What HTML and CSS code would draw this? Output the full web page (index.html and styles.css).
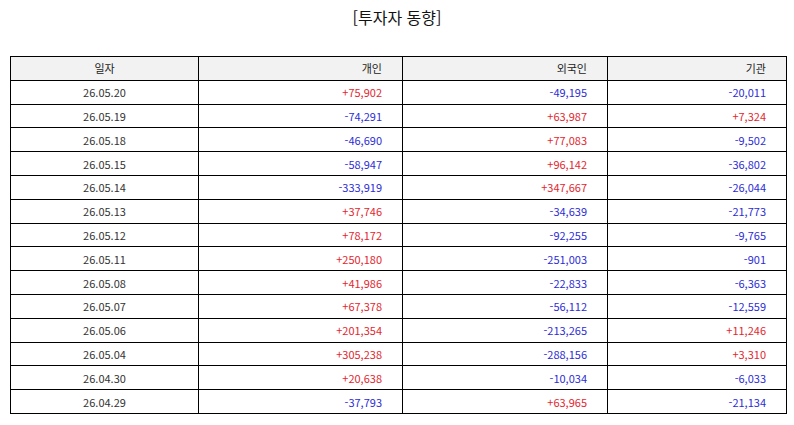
FILE: index.html
```html
<!DOCTYPE html>
<html lang="ko">
<head>
<meta charset="utf-8">
<link rel="stylesheet" href="styles.css">
</head>
<body>
<h1 class="title">[투자자 동향]</h1>
<table class="grid">
  <colgroup>
    <col class="c-date"><col class="c-ind"><col class="c-for"><col class="c-inst">
  </colgroup>
  <thead>
    <tr><th class="center">일자</th><th>개인</th><th>외국인</th><th>기관</th></tr>
  </thead>
  <tbody>
    <tr><td class="center">26.05.20</td><td class="up">+75,902</td><td class="down">-49,195</td><td class="down">-20,011</td></tr>
    <tr><td class="center">26.05.19</td><td class="down">-74,291</td><td class="up">+63,987</td><td class="up">+7,324</td></tr>
    <tr><td class="center">26.05.18</td><td class="down">-46,690</td><td class="up">+77,083</td><td class="down">-9,502</td></tr>
    <tr><td class="center">26.05.15</td><td class="down">-58,947</td><td class="up">+96,142</td><td class="down">-36,802</td></tr>
    <tr><td class="center">26.05.14</td><td class="down">-333,919</td><td class="up">+347,667</td><td class="down">-26,044</td></tr>
    <tr><td class="center">26.05.13</td><td class="up">+37,746</td><td class="down">-34,639</td><td class="down">-21,773</td></tr>
    <tr><td class="center">26.05.12</td><td class="up">+78,172</td><td class="down">-92,255</td><td class="down">-9,765</td></tr>
    <tr><td class="center">26.05.11</td><td class="up">+250,180</td><td class="down">-251,003</td><td class="down">-901</td></tr>
    <tr><td class="center">26.05.08</td><td class="up">+41,986</td><td class="down">-22,833</td><td class="down">-6,363</td></tr>
    <tr><td class="center">26.05.07</td><td class="up">+67,378</td><td class="down">-56,112</td><td class="down">-12,559</td></tr>
    <tr><td class="center">26.05.06</td><td class="up">+201,354</td><td class="down">-213,265</td><td class="up">+11,246</td></tr>
    <tr><td class="center">26.05.04</td><td class="up">+305,238</td><td class="down">-288,156</td><td class="up">+3,310</td></tr>
    <tr><td class="center">26.04.30</td><td class="up">+20,638</td><td class="down">-10,034</td><td class="down">-6,033</td></tr>
    <tr><td class="center">26.04.29</td><td class="down">-37,793</td><td class="up">+63,965</td><td class="down">-21,134</td></tr>
  </tbody>
</table>
</body>
</html>
```
FILE: styles.css
```css
html, body {
  margin: 0;
  padding: 0;
  background: #ffffff;
}
body {
  font-family: "Noto Sans CJK KR", "Noto Sans", sans-serif;
  color: #333333;
}
.title {
  margin: 6px 0 0 0;
  height: 50px;
  font-size: 16px;
  line-height: 22px;
  font-weight: normal;
  text-align: center;
  color: #111111;
}
.grid {
  margin-left: 10px;
  width: 776px;
  border-collapse: collapse;
  table-layout: fixed;
  border: 1px solid #000000;
  font-size: 11px;
}
.c-date { width: 188px; }
.c-ind { width: 204px; }
.c-for { width: 205px; }
.c-inst { width: 179px; }
.grid th, .grid td {
  border: 1px solid #000000;
  height: 22.8px;
  padding: 0 20px 0 0;
  text-align: right;
  line-height: 14px;
  white-space: nowrap;
}
.grid th {
  background: #f2f2f2;
  font-weight: normal;
  color: #222222;
}
.grid .center {
  text-align: center;
  padding: 0;
}
.up { color: #e3262e; }
.down { color: #2c2cd6; }
```
